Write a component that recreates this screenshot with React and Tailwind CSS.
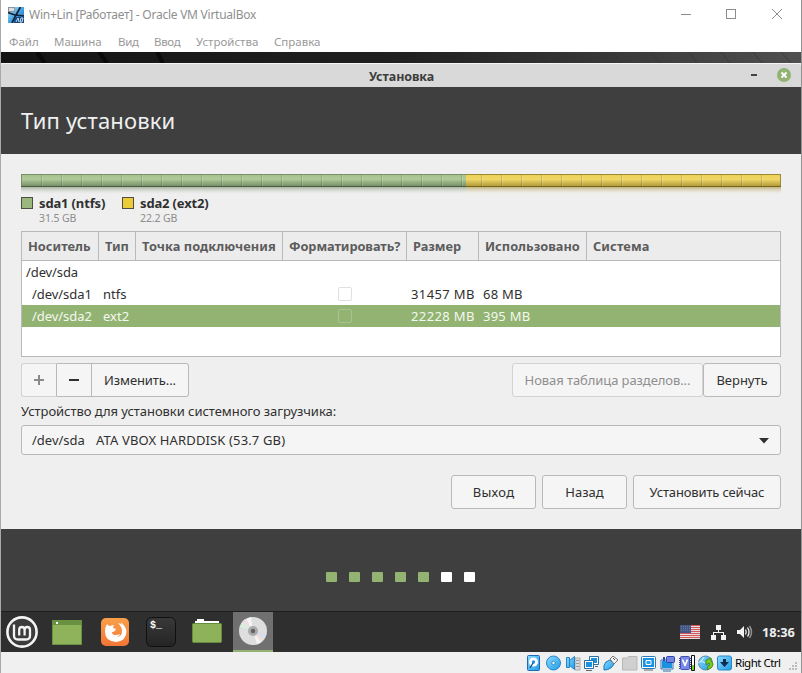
import React from "react";

const cols = "grid grid-cols-[77px_37px_147px_124px_72px_108px_1fr]";

function Button({ className = "", children }) {
  return (
    <button className={`flex items-center justify-center whitespace-nowrap rounded-[3px] border border-[#b9b9b9] bg-[#f5f5f5] pt-px text-[#303030] ${className}`}>
      {children}
    </button>
  );
}

function TitleBar() {
  return (
    <div className="flex h-7 shrink-0 items-center bg-white pl-[7px] pt-px">
      <svg width="16" height="16" viewBox="0 0 16 16">
        <defs>
          <linearGradient id="vb" x1="0" y1="0" x2="1" y2="1">
            <stop offset="0" stopColor="#bfe6fa" />
            <stop offset=".5" stopColor="#46a6e6" />
            <stop offset="1" stopColor="#1760ae" />
          </linearGradient>
        </defs>
        <rect width="16" height="16" fill="url(#vb)" />
        <path d="M0 0h7v5H0z" fill="#8a949b" />
        <path d="M1 1h5v3H1z" fill="#d9dde0" />
        <path d="M0 5.500l7 2.500 9 1M12.500 0L8 8l-4 8" stroke="#132334" strokeWidth="1.700" fill="none" />
        <path d="M7 10h9v6H6z" fill="#16477f" />
        <path d="M8 15l2-4 1 4m2-4h2l-1 4h-2z" stroke="#d5efff" fill="none" strokeWidth=".9" />
      </svg>
      <span className="ml-[5px] flex-1 text-[12px] leading-4 tracking-[-0.25px] text-[#8f8f8f]">Win+Lin [Работает] - Oracle VM VirtualBox</span>
      <svg width="110" height="16" viewBox="0 0 110 16" className="mr-[14px] mb-px" fill="none" stroke="#8c8c8c" shapeRendering="crispEdges">
        <path d="M4 8.5h10" />
        <rect x="49.5" y="3.5" width="9" height="9" />
        <path d="M95 3l10 10M105 3L95 13" shapeRendering="auto" />
      </svg>
    </div>
  );
}

function MenuBar() {
  return (
    <div className="flex h-6 shrink-0 items-center bg-white pl-2 pt-[3px] text-[11.5px] text-[#999]">
      <span className="w-[45px]">Файл</span>
      <span className="w-[64px]">Машина</span>
      <span className="w-[36px] tracking-[-0.3px]">Вид</span>
      <span className="w-[42px] tracking-[-0.3px]">Ввод</span>
      <span className="w-[78px]">Устройства</span>
      <span>Справка</span>
    </div>
  );
}

function PartitionBar() {
  return (
    <div className="h-[23px] w-[760px] shrink-0">
      <svg width="760" height="22" viewBox="0 0 760 22" shapeRendering="crispEdges">
        <defs>
          <linearGradient id="g" x1="0" y1="0" x2="0" y2="1">
            <stop offset="0" stopColor="#a5c08b" />
            <stop offset=".4" stopColor="#b0ca98" />
            <stop offset="1" stopColor="#6f8761" />
          </linearGradient>
          <linearGradient id="y" x1="0" y1="0" x2="0" y2="1">
            <stop offset="0" stopColor="#edcf50" />
            <stop offset=".4" stopColor="#f0d768" />
            <stop offset="1" stopColor="#ab9433" />
          </linearGradient>
          <linearGradient id="gr" x1="0" y1="0" x2="0" y2="1">
            <stop offset="0" stopColor="#829274" stopOpacity=".65" />
            <stop offset="1" stopColor="#efefef" stopOpacity="0" />
          </linearGradient>
          <linearGradient id="yr" x1="0" y1="0" x2="0" y2="1">
            <stop offset="0" stopColor="#ae9a48" stopOpacity=".7" />
            <stop offset="1" stopColor="#efefef" stopOpacity="0" />
          </linearGradient>
        </defs>
        <rect width="445" height="13" fill="url(#g)" />
        <rect x="445" width="315" height="13" fill="url(#y)" />
        {Array.from({ length: 37 }, (_, i) => (
          <g key={i}>
            <rect x={20 + i * 20} y="1" width="1" height="11" fill="#000" opacity=".14" />
            <rect x={21 + i * 20} y="1" width="1" height="11" fill="#fff" opacity=".18" />
          </g>
        ))}
        <path d="M.5 13V.5H445" stroke="#7b8f6b" fill="none" />
        <path d="M445 .5h314.5V13" stroke="#9d8a36" fill="none" />
        <rect y="12" width="445" height="1" fill="#4c5e42" />
        <rect x="445" y="12" width="315" height="1" fill="#75651e" />
        <rect y="13" width="445" height="8" fill="url(#gr)" />
        <rect x="445" y="13" width="315" height="8" fill="url(#yr)" />
      </svg>
    </div>
  );
}

function Legend({ swatch, name, size, className }) {
  return (
    <div className={`flex ${className}`}>
      <span className={`size-3 shrink-0 border border-[#4e4e44] ${swatch}`} />
      <div className="-mt-[2px] ml-[6px] whitespace-nowrap">
        <div className="text-[13px] font-bold leading-4 tracking-[-0.15px] text-[#303030]">{name}</div>
        <div className="text-[10.5px] leading-[14px] tracking-[-0.1px] text-[#8c8c8c]">{size}</div>
      </div>
    </div>
  );
}

function Row({ dev, type, size, used, selected }) {
  return (
    <div className={`${cols} h-[22px] items-center pt-px ${selected ? "bg-[#92b372] text-[#f5f8f1]" : ""}`}>
      <span className="pl-[10px] tracking-[-0.06px]">{dev}</span>
      <span className="pl-1">{type}</span>
      <span />
      <span className={`mb-px ml-[55px] size-[14px] rounded-[2px] border ${selected ? "border-[#a9c38f]" : "border-[#e0e0e0]"}`} />
      <span className="pl-1 tracking-[0.38px]">{size}</span>
      <span className="pl-1 tracking-[0.25px]">{used}</span>
      <span />
    </div>
  );
}

function PartitionTable() {
  const head = "flex items-center border-r border-[#b9b9b9] pl-[6px] pt-px";
  return (
    <div className="mt-[5px] h-[126px] shrink-0 border border-[#b9b9b9] bg-white text-[13px] whitespace-nowrap text-[#303030]">
      <div className={`${cols} h-[29px] border-b border-[#b9b9b9] bg-[#ececec] text-[12.8px] font-bold text-[#5c5c5c]`}>
        <span className={head}>Носитель</span>
        <span className={head}>Тип</span>
        <span className={`${head} tracking-[0.06px]`}>Точка подключения</span>
        <span className={`${head} tracking-[-0.07px]`}>Форматировать?</span>
        <span className={head}>Размер</span>
        <span className={head}>Использовано</span>
        <span className="flex items-center pl-[6px] pt-px tracking-[0.1px]">Система</span>
      </div>
      <div className="flex h-[22px] items-center pl-1 pt-px tracking-[-0.1px]">/dev/sda</div>
      <Row dev="/dev/sda1" type="ntfs" size="31457 MB" used="68 MB" />
      <Row dev="/dev/sda2" type="ext2" size="22228 MB" used="395 MB" selected />
    </div>
  );
}

function Installer() {
  return (
    <div className="flex h-[375px] shrink-0 flex-col bg-[#efefef] px-5 pt-5 text-[13px]">
      <PartitionBar />
      <div className="flex h-[29px] shrink-0">
        <Legend className="w-[101px]" swatch="bg-[#9ab87c]" name="sda1 (ntfs)" size="31.5 GB" />
        <Legend swatch="bg-[#ebcb38]" name="sda2 (ext2)" size="22.2 GB" />
      </div>
      <PartitionTable />
      <div className="mt-[6px] flex h-[34px] shrink-0">
        <Button className="w-[36px] rounded-r-none border-r-[#b9b9b9] border-[#d3d3d3] !pt-0">
          <svg width="10" height="10" className="text-[#8a8a8a]"><path d="M0 4h4V0h2v4h4v2H6v4H4V6H0z" fill="currentColor" /></svg>
        </Button>
        <Button className="w-[35px] rounded-none border-l-0 !pt-0">
          <svg width="10" height="10"><path d="M0 4h10v2H0z" fill="#303030" /></svg>
        </Button>
        <Button className="w-[97px] rounded-l-none border-l-0 tracking-[-0.1px]">Изменить...</Button>
        <Button className="ml-auto w-[191px] border-[#d3d3d3] !text-[#8f8f8f] tracking-[-0.08px]">Новая таблица разделов...</Button>
        <Button className="w-[78px]">Вернуть</Button>
      </div>
      <div className="mt-[5px] h-[18px] shrink-0 whitespace-nowrap leading-[18px] tracking-[-0.05px] text-[#303030]">Устройство для установки системного загрузчика:</div>
      <Button className="mt-[5px] h-[30px] shrink-0 !justify-start pl-[10px] pr-[11px]">
        <span className="w-[64px] text-left">/dev/sda</span>
        <span className="flex-1 text-left tracking-[0.14px]">ATA VBOX HARDDISK (53.7 GB)</span>
        <svg width="10" height="6"><path d="M0 0h10L5 5.5z" fill="#303030" /></svg>
      </Button>
      <div className="mt-5 flex h-[34px] shrink-0 justify-end gap-[6px]">
        <Button className="w-[85px] tracking-[0.3px]">Выход</Button>
        <Button className="w-[85px]">Назад</Button>
        <Button className="w-[148px] tracking-[-0.15px]">Установить сейчас</Button>
      </div>
    </div>
  );
}

function TaskBar() {
  return (
    <div className="flex h-[41px] shrink-0 items-center border-t border-[#1e1e1e] bg-[#2f2f2f] pl-[5px] pr-[5px]">
      <svg width="32" height="32" viewBox="0 0 32 32" fill="none" stroke="#f4f4f4">
        <circle cx="16" cy="16" r="14.600" fill="#3c3c3c" strokeWidth="2.600" />
        <path d="M8 8.500v11q0 4 4 4h8q4 0 4-4V14q0-3-2.700-3t-2.700 3v5.500m0-5.500q0-3-2.700-3t-2.700 3v5.500" strokeWidth="2.300" />
      </svg>
      <svg width="30" height="25" className="ml-[14px]" viewBox="0 0 30 25">
        <rect width="30" height="25" fill="#689142" />
        <rect x="1" y="5" width="28" height="19" fill="#8fb35b" />
        <rect x="4" y="2" width="2" height="2" fill="#fff" />
      </svg>
      <svg width="30" height="30" className="mb-px ml-[18px]" viewBox="0 0 30 30">
        <defs><linearGradient id="ff" x1="0" y1="0" x2="0" y2="1"><stop stopColor="#f8a04b" /><stop offset="1" stopColor="#f57635" /></linearGradient></defs>
        <rect x="1" y="1" width="28" height="28" rx="5" fill="url(#ff)" />
        <path d="M7 7q1 2 3 2 2-1 4-1-1 2-1 3l3 1q-1 3-4 3 0 3 3 3 3 0 5-1-1 3-4 3 6 0 6-6 0-4-4-8 8 2 8.500 8 0 10-10.500 11Q5 24 5 15q0-5 2-8z" fill="#fff" />
        <path d="M21 6q4 3 4.500 9" stroke="#fff" strokeWidth="1.200" fill="none" opacity=".7" />
      </svg>
      <svg width="32" height="32" className="mb-px ml-[15px]" viewBox="0 0 32 32">
        <defs><linearGradient id="tm" x1="0" y1="0" x2="0" y2="1"><stop stopColor="#393939" /><stop offset="1" stopColor="#242424" /></linearGradient></defs>
        <rect x="1.500" y="1.500" width="29" height="29" rx="5" fill="url(#tm)" stroke="#101010" />
        <text x="5" y="12" fill="#fff" fontFamily="Liberation Mono" fontWeight="bold" fontSize="10">$_</text>
      </svg>
      <svg width="32" height="28" className="mb-1 ml-[14px]" viewBox="0 0 32 28">
        <path d="M4 9V5h2V3h7v2h15v5z" fill="#fff" />
        <rect x="1.500" y="7.500" width="29" height="19" rx="1" fill="#8db25a" stroke="#648c3d" />
      </svg>
      <div className="ml-[10px] flex h-10 w-10 justify-center border-b-2 border-[#92b372] bg-[#707070] pt-[4px]">
        <svg width="30" height="30" viewBox="0 0 30 30">
          <circle cx="15" cy="15" r="14" fill="#dedede" />
          <path d="M15 15L3 8a14 14 0 0 1 4-5z" fill="#f0dce8" />
          <path d="M15 15L2 11l2-5z" fill="#d6eeda" />
          <path d="M15 15l8 11a14 14 0 0 0 4-5z" fill="#f1dfd2" />
          <path d="M15 15l13 4-2 4z" fill="#d6deef" />
          <path d="M15 15L8 3l5-2z" fill="#f5f5f5" />
          <path d="M15 15l4 13 4-2z" fill="#f5f5f5" />
          <circle cx="15" cy="15" r="5" fill="#aaa" />
          <circle cx="15" cy="15" r="2.200" fill="#626262" />
        </svg>
      </div>
      <div className="flex-1" />
      <svg width="20" height="14" viewBox="0 0 20 14">
        <rect width="20" height="14" fill="#e9dcdc" />
        <path d="M0 .5h20M0 2.500h20M0 4.500h20M0 6.500h20M0 8.500h20M0 10.500h20M0 12.500h20" stroke="#d4565b" strokeWidth="1.200" />
        <rect width="11" height="8" fill="#465684" />
        <path d="M1 1.500h9M1 3.500h9M1 5.500h9" stroke="#66759b" strokeDasharray="1 1" />
      </svg>
      <svg width="15" height="15" className="ml-[11px]" viewBox="0 0 15 15" fill="#f3f3f3">
        <path d="M5 0h5v5H8v2h5v3h2v5h-5v-5h2V8H3v2h2v5H0v-5h2V7h5V5H5z" />
      </svg>
      <svg width="16" height="14" className="ml-[11px]" viewBox="0 0 16 14" fill="none" stroke="#f3f3f3">
        <path d="M0 5h3l4-4v12L3 9H0z" fill="#f3f3f3" stroke="none" />
        <path d="M8.500 4.500q1.500 2.500 0 5M10.500 2.500q3 4.500 0 9" strokeWidth="1.300" />
        <path d="M12.500 1q4 6 0 12" stroke="#929292" strokeWidth="1.500" />
      </svg>
      <span className="ml-[9px] w-[34px] whitespace-nowrap pt-px text-[12.800px] font-bold text-[#eee]">18:36</span>
    </div>
  );
}

const blue = "#1b91e2";

function StatusBar() {
  return (
    <div className="flex h-[21px] shrink-0 items-center bg-[#f0f0f0] pl-[523px]">
      <svg width="208" height="18" viewBox="0 0 208 18" className="shrink-0">
        <defs>
          <linearGradient id="bl" x1="0" y1="0" x2="1" y2="1"><stop stopColor="#8bdcff" /><stop offset="1" stopColor="#209be5" /></linearGradient>
        </defs>
        <g strokeLinejoin="round">
          <rect x="3.500" y="1.500" width="12" height="15" rx="1" fill="url(#bl)" stroke="#2468b4" />
          <circle cx="9.500" cy="8" r="4.500" fill="#fff" />
          <circle cx="9.500" cy="8" r="1.700" fill={blue} />
          <path d="M6 14l3-5" stroke="#174b83" strokeWidth="1.300" />

          <circle cx="29.500" cy="9" r="7" fill="url(#bl)" stroke="#2387cf" />
          <circle cx="29.500" cy="9" r="1.700" fill="#fff" stroke="#1878c0" strokeWidth=".8" />

          <path d="M51 4h5v12h-5z" fill="#dadada" stroke="#aaa" />
          <path d="M52 6.500h3M52 9.500h3M52 12.500h3" stroke="#999" />
          <path d="M42.500 3.500h3v10h-3zM45.500 6.500l5-4v13l-5-4z" fill="url(#bl)" stroke="#2584c6" />

          <rect x="65.500" y="2.500" width="9" height="8" fill="#fff" stroke="#2671a9" />
          <rect x="67" y="4" width="6" height="5" fill={blue} />
          <rect x="60.500" y="6.500" width="9" height="8" fill="#fff" stroke="#2671a9" />
          <rect x="62" y="8" width="6" height="5" fill={blue} />
          <path d="M62 16.500h6m3-4h3" stroke="#666" />

          <path d="M80 16q-1-5 2-8l4-2 4 4q-3 6-10 6z" fill="url(#bl)" stroke="#2477b5" />
          <path d="M86 5l3-3 5 4-4 4z" fill="#f3f3f3" stroke="#777" />
          <path d="M89 4l2 2" stroke="#555" />

          <path d="M98.500 16V4h5l1-1.500h8.500V16z" fill="#d0d0d0" stroke="#b7b7b7" />

          <rect x="117.500" y="2.500" width="14" height="12" rx="1" fill="#fff" stroke="#287cb8" />
          <rect x="119" y="4" width="11" height="9" fill={blue} />
          <rect x="122" y="6.500" width="5" height="4" fill="#2ba1ed" stroke="#fff" />
          <path d="M120 16h9" stroke="#666" />

          <rect x="137.500" y="6.500" width="11" height="8" fill={blue} stroke="#fff" />
          <path d="M137 6h12v9h-12zM139 17h8" fill="none" stroke="#2870aa" />
          <rect x="142.500" y="2.500" width="8" height="6" rx="1" fill="#7383e2" stroke="#3142a6" />
          <path d="M140 3v4" stroke="#3142a6" strokeWidth="2" />

          <rect x="156.500" y="2.500" width="9" height="13" rx="1" fill="#7788e8" stroke="#3f50ae" />
          <path d="M155.500 4v11M166.500 4v11" stroke="#3444a1" strokeDasharray="1 1" />
          <path d="M158.500 5.500l2.500 6 2.500-6" fill="none" stroke="#fff" strokeWidth="1.700" />
          <rect x="167.500" y="1.500" width="3" height="15" fill="#fff" stroke="#111" />
          <rect x="168" y="11" width="2" height="5" fill="#6ad914" />

          <circle cx="181.500" cy="9" r="7" fill="url(#bl)" stroke="#558aab" />
          <path d="M180 3q-2 5-6 6m7 0l-4-2" fill="none" stroke="#dff5ff" />
          <path d="M182 6l5-2v3q4 3 0 7l-4 2 1-4q3-1 1-3l-3 2z" fill="#79c921" stroke="#458d22" />

          <rect x="193.500" y="2" width="14" height="14" rx="2" fill="url(#bl)" stroke="#2588c7" />
          <path d="M199 5h3v3h3l-4.500 5L196 8h3z" fill="#102d50" />
        </g>
      </svg>
      <span className="ml-[3px] whitespace-nowrap text-[11.5px] tracking-[-0.5px] text-black">Right Ctrl</span>
      <svg width="9" height="9" className="ml-auto mr-[3px] mt-2" fill="#bdbdbd">
        <path d="M6 0h2v2H6zM3 3h2v2H3zM6 3h2v2H6zM0 6h2v2H0zM3 6h2v2H3zM6 6h2v2H6z" />
      </svg>
    </div>
  );
}

export default function App() {
  return (
    <div className="flex h-[673px] w-[802px] flex-col overflow-hidden border-x border-l-[#a9a9a9] border-r-[#929292] bg-[#efefef] font-['Noto_Sans','Open_Sans',sans-serif]">
      <TitleBar />
      <MenuBar />
      <div className="h-[11px] shrink-0 bg-linear-to-r from-[#141414] via-[#202020] to-[#505050]">
        <svg width="800" height="11" stroke="#050505" fill="none">
          <path d="M36 0l8 11M98 0l8 11M156 0l6 11" strokeWidth="4" opacity=".7" />
          <path d="M612 0l8 11M650 0l9 11M688 0l8 11M720 0l9 11M752 0l9 11M780 0l10 11" stroke="#333" opacity=".6" />
        </svg>
      </div>
      <div className="flex h-6 shrink-0 items-center rounded-t-[3px] border-t border-[#f5f5f5] bg-[#d9d9d9]">
        <span className="ml-[368px] flex-1 pt-[3px] text-[12.5px] font-bold tracking-[-0.08px] text-[#3d3d3d]">Установка</span>
        <span className="mb-px h-[2px] w-[6px] bg-[#444]" />
        <svg width="14" height="14" viewBox="0 0 14 14" className="mb-px ml-5 mr-[10px]">
          <circle cx="7" cy="7" r="7" fill="#92b372" />
          <path d="M4.500 4.500l5 5m0-5l-5 5" stroke="#fff" strokeWidth="2" />
        </svg>
      </div>
      <div className="flex h-[67px] shrink-0 items-center bg-[#3f3f3f] pl-5 text-[22px] tracking-[0.15px] text-[#f0f0f0]">Тип установки</div>
      <Installer />
      <div className="flex h-[82px] shrink-0 justify-center gap-3 bg-[#3f3f3f] pr-[2px] pt-[43px]">
        {[1, 1, 1, 1, 1, 0, 0].map((done, i) => (
          <span key={i} className={`h-[10px] w-[11px] rounded-[1px] ${done ? "bg-[#92b372]" : "bg-white"}`} />
        ))}
      </div>
      <TaskBar />
      <StatusBar />
    </div>
  );
}
